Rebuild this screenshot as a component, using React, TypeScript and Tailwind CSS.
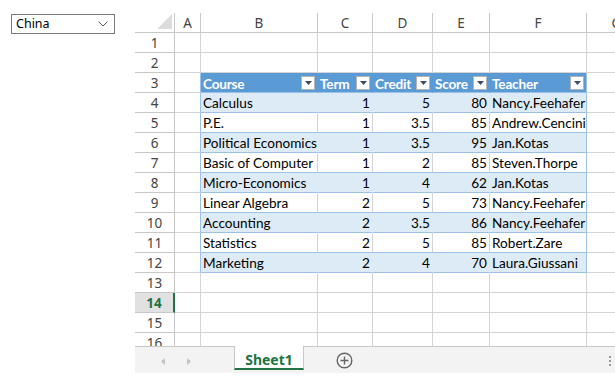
import React from "react";

type Row = [string, number, number, number, string];

const data: Row[] = [
  ["Calculus", 1, 5, 80, "Nancy.Feehafer"],
  ["P.E.", 1, 3.5, 85, "Andrew.Cencini"],
  ["Political Economics", 1, 3.5, 95, "Jan.Kotas"],
  ["Basic of Computer", 1, 2, 85, "Steven.Thorpe"],
  ["Micro-Economics", 1, 4, 62, "Jan.Kotas"],
  ["Linear Algebra", 2, 5, 73, "Nancy.Feehafer"],
  ["Accounting", 2, 3.5, 86, "Nancy.Feehafer"],
  ["Statistics", 2, 5, 85, "Robert.Zare"],
  ["Marketing", 2, 4, 70, "Laura.Giussani"],
];

const widths = [
  "w-[40px]",
  "w-[26px]",
  "w-[117px]",
  "w-[55px]",
  "w-[60px]",
  "w-[57px]",
  "w-[97px]",
  "w-[60px]",
];

const letters = ["", "A", "B", "C", "D", "E", "F", "G"];
const heads = ["Course", "Term", "Credit", "Score", "Teacher"];

function FilterButton() {
  return (
    <span className="flex h-[14px] w-[14px] shrink-0 items-center justify-center border border-[#b4b4b4] bg-white">
      <svg width="7" height="4" viewBox="0 0 7 4" aria-hidden="true">
        <path d="M0 0h7L3.5 4z" fill="#3f4a6b" />
      </svg>
    </span>
  );
}

function Chevron() {
  return (
    <svg width="10" height="6" viewBox="0 0 10 6" fill="none" aria-hidden="true">
      <path d="M0.5 0.5L5 5L9.5 0.5" stroke="#555" strokeWidth="1" />
    </svg>
  );
}

function HeaderRow() {
  return (
    <div className="flex h-[20px]">
      <div className={`${widths[0]} relative h-[20px] shrink-0 border-r border-b border-[#c8c8c8] bg-white`}>
        <svg className="absolute right-[2px] bottom-[3px]" width="15" height="15" viewBox="0 0 15 15" aria-hidden="true">
          <path d="M15 0V15H0z" fill="#dcdcdc" />
        </svg>
      </div>
      {letters.slice(1).map((l, i) => (
        <div
          key={l}
          className={`${widths[i + 1]} h-[20px] shrink-0 border-r border-b border-[#c8c8c8] bg-white pt-[1px] text-center text-[13.5px] leading-[18px] text-[#444]`}
        >
          {l}
        </div>
      ))}
    </div>
  );
}

function cellBorder(r: number, c: number) {
  // c: 1 = A, 2..6 = B..F, 7 = G
  if (c === 1) {
    return r >= 3 && r <= 12 ? "border-r-[#9bc2e6] border-b-[#d4d4d4]" : "border-[#d4d4d4]";
  }
  if (c >= 2 && c <= 6) {
    const last = c === 6;
    if (r === 2) return "border-[#d4d4d4]";
    if (r === 3) return last ? "border-r-[#9bc2e6] border-b-[#9bc2e6] bg-[#5b9bd5]" : "border-r-[#5b9bd5] border-b-[#9bc2e6] bg-[#5b9bd5]";
    if (r >= 4 && r <= 12) {
      const band = r % 2 === 0;
      if (band) return last ? "border-r-[#9bc2e6] border-b-[#9bc2e6] bg-[#ddebf7]" : "border-r-[#ddebf7] border-b-[#9bc2e6] bg-[#ddebf7]";
      return last ? "border-r-[#9bc2e6] border-b-[#9bc2e6] bg-white" : "border-r-[#d4d4d4] border-b-[#9bc2e6] bg-white";
    }
  }
  return "border-[#d4d4d4]";
}

function cellContent(r: number, c: number) {
  if (r === 3 && c >= 2 && c <= 6) {
    return (
      <div className="flex h-full items-center justify-between pr-[2px] pl-[2px]">
        <span className="pt-[3px] font-bold tracking-[-0.2px] text-white">{heads[c - 2]}</span>
        <FilterButton />
      </div>
    );
  }
  if (r >= 4 && r <= 12 && c >= 2 && c <= 6) {
    const v = data[r - 4][c - 2];
    const num = typeof v === "number";
    return (
      <div className={num ? "px-[2px] pt-[2px] text-right whitespace-nowrap" : "px-[2px] pt-[2px] whitespace-nowrap"}>
        {String(v)}
      </div>
    );
  }
  return null;
}

function GridRow({ r }: { r: number }) {
  const sel = r === 14;
  return (
    <div className="flex h-[20px]">
      <div
        className={
          sel
            ? `${widths[0]} h-[20px] shrink-0 border-r-2 border-b border-r-[#217346] border-b-[#c8c8c8] bg-[#e1e1e1] pt-[2px] text-center font-['Noto_Sans',sans-serif] text-[13.5px] leading-[17px] font-bold text-[#217346]`
            : `${widths[0]} h-[20px] shrink-0 border-r border-b border-[#c8c8c8] bg-white pt-[2px] text-center font-['Noto_Sans',sans-serif] text-[13.5px] leading-[17px] text-[#444]`
        }
      >
        {r}
      </div>
      {widths.slice(1).map((w, i) => (
        <div
          key={i}
          className={`${w} h-[20px] shrink-0 overflow-hidden border-r border-b leading-[17px] ${cellBorder(r, i + 1)}`}
        >
          {cellContent(r, i + 1)}
        </div>
      ))}
    </div>
  );
}

export default function App() {
  const rows = Array.from({ length: 16 }, (_, i) => i + 1);
  return (
    <div className="flex h-[383px] w-[615px] overflow-hidden bg-white font-['Lato',sans-serif] text-[13.6px] text-black">
      <div className="w-[135px] shrink-0 pt-[14px] pl-[11px]">
        <div className="flex h-[20px] w-[104px] items-center justify-between border border-[#7a7a7a] bg-white pr-[6px] pl-[4px] font-['Noto_Sans',sans-serif] text-[12.5px] text-black">
          <span>China</span>
          <Chevron />
        </div>
      </div>

      <div className="flex w-[480px] shrink-0 flex-col">
        <div className="h-[13px] shrink-0" />
        <div className="h-[333px] shrink-0 overflow-hidden font-['Noto_Sans',sans-serif]">
          <HeaderRow />
          <div className="font-['Lato',sans-serif]">
            {rows.map((r) => (
              <GridRow key={r} r={r} />
            ))}
          </div>
        </div>

        <div className="flex h-[27px] shrink-0 items-stretch border-t border-[#c8c8c8] bg-[#f3f3f3]">
          <div className="flex w-[99px] items-center gap-[22px] pt-[2px] pl-[26px]">
            <svg width="4" height="7" viewBox="0 0 4 7" aria-hidden="true">
              <path d="M4 0V7L0 3.5z" fill="#c4c4c4" />
            </svg>
            <svg width="4" height="7" viewBox="0 0 4 7" aria-hidden="true">
              <path d="M0 0V7L4 3.5z" fill="#c4c4c4" />
            </svg>
          </div>
          <div className="-mt-px mb-[3px] flex w-[70px] items-center justify-center border-x border-[#c8c8c8] border-b-2 border-b-[#217346] bg-white pt-[5px] font-['Noto_Sans',sans-serif] text-[14px] font-bold text-[#217346]">
            Sheet1
          </div>
          <div className="flex w-[80px] items-center justify-center pt-[1px]">
            <svg width="17" height="17" viewBox="0 0 17 17" fill="none" aria-hidden="true">
              <circle cx="8.5" cy="8.5" r="7.3" stroke="#666" strokeWidth="1.4" />
              <path d="M8.5 4.5v8M4.5 8.5h8" stroke="#666" strokeWidth="1.4" />
            </svg>
          </div>
          <div className="flex flex-1 items-center justify-end pr-[4px] pt-[1px]">
            <div className="flex flex-col gap-[2px]">
              <span className="h-[2px] w-[2px] bg-[#999]" />
              <span className="h-[2px] w-[2px] bg-[#999]" />
              <span className="h-[2px] w-[2px] bg-[#999]" />
            </div>
          </div>
        </div>
        <div className="flex-1 bg-white" />
      </div>
    </div>
  );
}
